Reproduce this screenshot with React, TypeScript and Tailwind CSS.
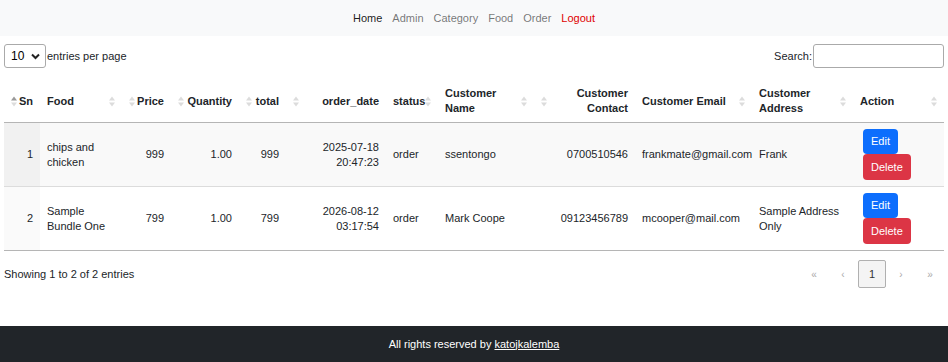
import React from "react";

const font = { fontFamily: '"Liberation Sans", Arial, sans-serif' };

function SortIcon({ active = false }: { active?: boolean }) {
  return (
    <svg width="6" height="11" viewBox="0 0 6 11" className="shrink-0">
      <polygon points="3,0.5 6,4.5 0,4.5" fill={active ? "#9a9a9a" : "#dcdcdc"} />
      <polygon points="0,6.5 6,6.5 3,10.5" fill="#dcdcdc" />
    </svg>
  );
}

type Col = { title: React.ReactNode; numeric: boolean; active?: boolean; w: string };

const cols: Col[] = [
  { title: "Sn", numeric: true, active: true, w: "w-[36px]" },
  { title: "Food", numeric: false, w: "w-[82px]" },
  { title: "Price", numeric: true, w: "w-[49px]" },
  { title: "Quantity", numeric: true, w: "w-[68px]" },
  { title: "total", numeric: true, w: "w-[47px]" },
  { title: "order_date", numeric: true, w: "w-[100px]" },
  { title: "status", numeric: false, w: "w-[52px]" },
  { title: <>Customer<br />Name</>, numeric: false, w: "w-[96px]" },
  { title: <>Customer<br />Contact</>, numeric: true, w: "w-[101px]" },
  { title: "Customer Email", numeric: false, w: "w-[117px]" },
  { title: <>Customer<br />Address</>, numeric: false, w: "w-[101px]" },
  { title: "Action", numeric: false, w: "w-[91px]" },
];

const rows = [
  {
    sn: "1",
    food: <>chips and<br />chicken</>,
    price: "999",
    qty: "1.00",
    total: "999",
    date: <>2025-07-18<br />20:47:23</>,
    status: "order",
    name: "ssentongo",
    contact: "0700510546",
    email: "frankmate@gmail.com",
    address: "Frank",
  },
  {
    sn: "2",
    food: <>Sample<br />Bundle One</>,
    price: "799",
    qty: "1.00",
    total: "799",
    date: <>2026-08-12<br />03:17:54</>,
    status: "order",
    name: "Mark Coope",
    contact: "09123456789",
    email: "mcooper@mail.com",
    address: <>Sample Address<br />Only</>,
  },
];

export default function App() {
  return (
    <div style={font} className="min-h-screen flex flex-col bg-white text-[#212529] text-[11px]">
      <nav className="h-[36px] bg-[#f8f9fa] flex items-center justify-center">
        <a className="px-[5px] text-[rgba(0,0,0,0.9)]">Home</a>
        <a className="px-[5px] text-[rgba(0,0,0,0.55)]">Admin</a>
        <a className="px-[5px] text-[rgba(0,0,0,0.55)]">Category</a>
        <a className="px-[5px] text-[rgba(0,0,0,0.55)]">Food</a>
        <a className="px-[5px] text-[rgba(0,0,0,0.55)]">Order</a>
        <a className="px-[5px] text-[#e00000]">Logout</a>
      </nav>

      <main className="px-[4px]">
        <div className="mt-[8px] flex items-center justify-between h-[24px]">
          <div className="flex items-center h-full">
            <div className="w-[42px] h-[24px] border border-[#aaa] rounded-[3px] flex items-center justify-between pl-[6px] pr-[5px] text-[12px] text-black">
              <span>10</span>
              <svg width="9" height="7" viewBox="0 0 9 7">
                <path d="M1 1.5 L4.5 5 L8 1.5" stroke="#222" strokeWidth="2" fill="none" />
              </svg>
            </div>
            <span className="ml-[1px]">entries per page</span>
          </div>
          <div className="flex items-center h-full">
            <span className="mr-[1px]">Search:</span>
            <div className="w-[131px] h-[24px] border border-[#aaa] rounded-[3px] bg-white" />
          </div>
        </div>

        <table className="mt-[12px] w-[940px] table-fixed border-collapse">
          <colgroup>
            {cols.map((c, i) => (
              <col key={i} className={c.w} />
            ))}
          </colgroup>
          <thead>
            <tr className="border-b border-[#b5b5b5]">
              {cols.map((c, i) => (
                <th key={i} className="px-[7px] py-[6px] h-[42px] align-middle font-bold leading-[15px]">
                  {c.numeric ? (
                    <div className="flex items-center justify-between">
                      <SortIcon active={c.active} />
                      <span className="text-right">{c.title}</span>
                    </div>
                  ) : (
                    <div className="flex items-center justify-between">
                      <span className="text-left">{c.title}</span>
                      <SortIcon />
                    </div>
                  )}
                </th>
              ))}
            </tr>
          </thead>
          <tbody>
            {rows.map((r, i) => {
              const rowBg = i === 0 ? "bg-[#f9f9f9]" : "bg-white";
              const snBg = i === 0 ? "bg-[#f1f1f1]" : "bg-[#fafafa]";
              const cell = "px-[7px] py-[6px] align-middle leading-[15px]";
              return (
                <tr key={i} className={`${rowBg} border-b ${i === rows.length - 1 ? "border-[#b5b5b5]" : "border-[#dcdcdc]"}`}>
                  <td className={`${cell} text-right ${snBg}`}>{r.sn}</td>
                  <td className={`${cell} text-left`}>{r.food}</td>
                  <td className={`${cell} text-right`}>{r.price}</td>
                  <td className={`${cell} text-right`}>{r.qty}</td>
                  <td className={`${cell} text-right`}>{r.total}</td>
                  <td className={`${cell} text-right`}>{r.date}</td>
                  <td className={`${cell} text-left`}>{r.status}</td>
                  <td className={`${cell} text-left`}>{r.name}</td>
                  <td className={`${cell} text-right`}>{r.contact}</td>
                  <td className={`${cell} text-left`}>{r.email}</td>
                  <td className={`${cell} text-left`}>{r.address}</td>
                  <td className="pl-[10px] pr-[7px] py-[6px] align-middle">
                    <div className="flex flex-col items-start">
                      <button className="h-[25px] px-[8px] rounded-[4px] bg-[#0d6efd] text-white leading-none">Edit</button>
                      <button className="h-[26px] px-[8px] rounded-[4px] bg-[#dc3545] text-white leading-none">Delete</button>
                    </div>
                  </td>
                </tr>
              );
            })}
          </tbody>
        </table>

        <div className="mt-[9px] flex items-center justify-between h-[28px]">
          <span>Showing 1 to 2 of 2 entries</span>
          <div className="flex items-center gap-[1px] text-[#aaa] text-[10px]">
            <span className="w-[28px] h-[28px] flex items-center justify-center">«</span>
            <span className="w-[28px] h-[28px] flex items-center justify-center">‹</span>
            <span className="w-[28px] h-[28px] flex items-center justify-center border border-[#b0b0b0] rounded-[2px] bg-[#f4f4f4] text-[#333] text-[11px]">1</span>
            <span className="w-[28px] h-[28px] flex items-center justify-center">›</span>
            <span className="w-[28px] h-[28px] flex items-center justify-center">»</span>
          </div>
        </div>
      </main>

      <footer className="mt-auto h-[36px] bg-[#212529] text-white flex items-center justify-center">
        <span>
          All rights reserved by <a className="underline">katojkalemba</a>
        </span>
      </footer>
    </div>
  );
}
